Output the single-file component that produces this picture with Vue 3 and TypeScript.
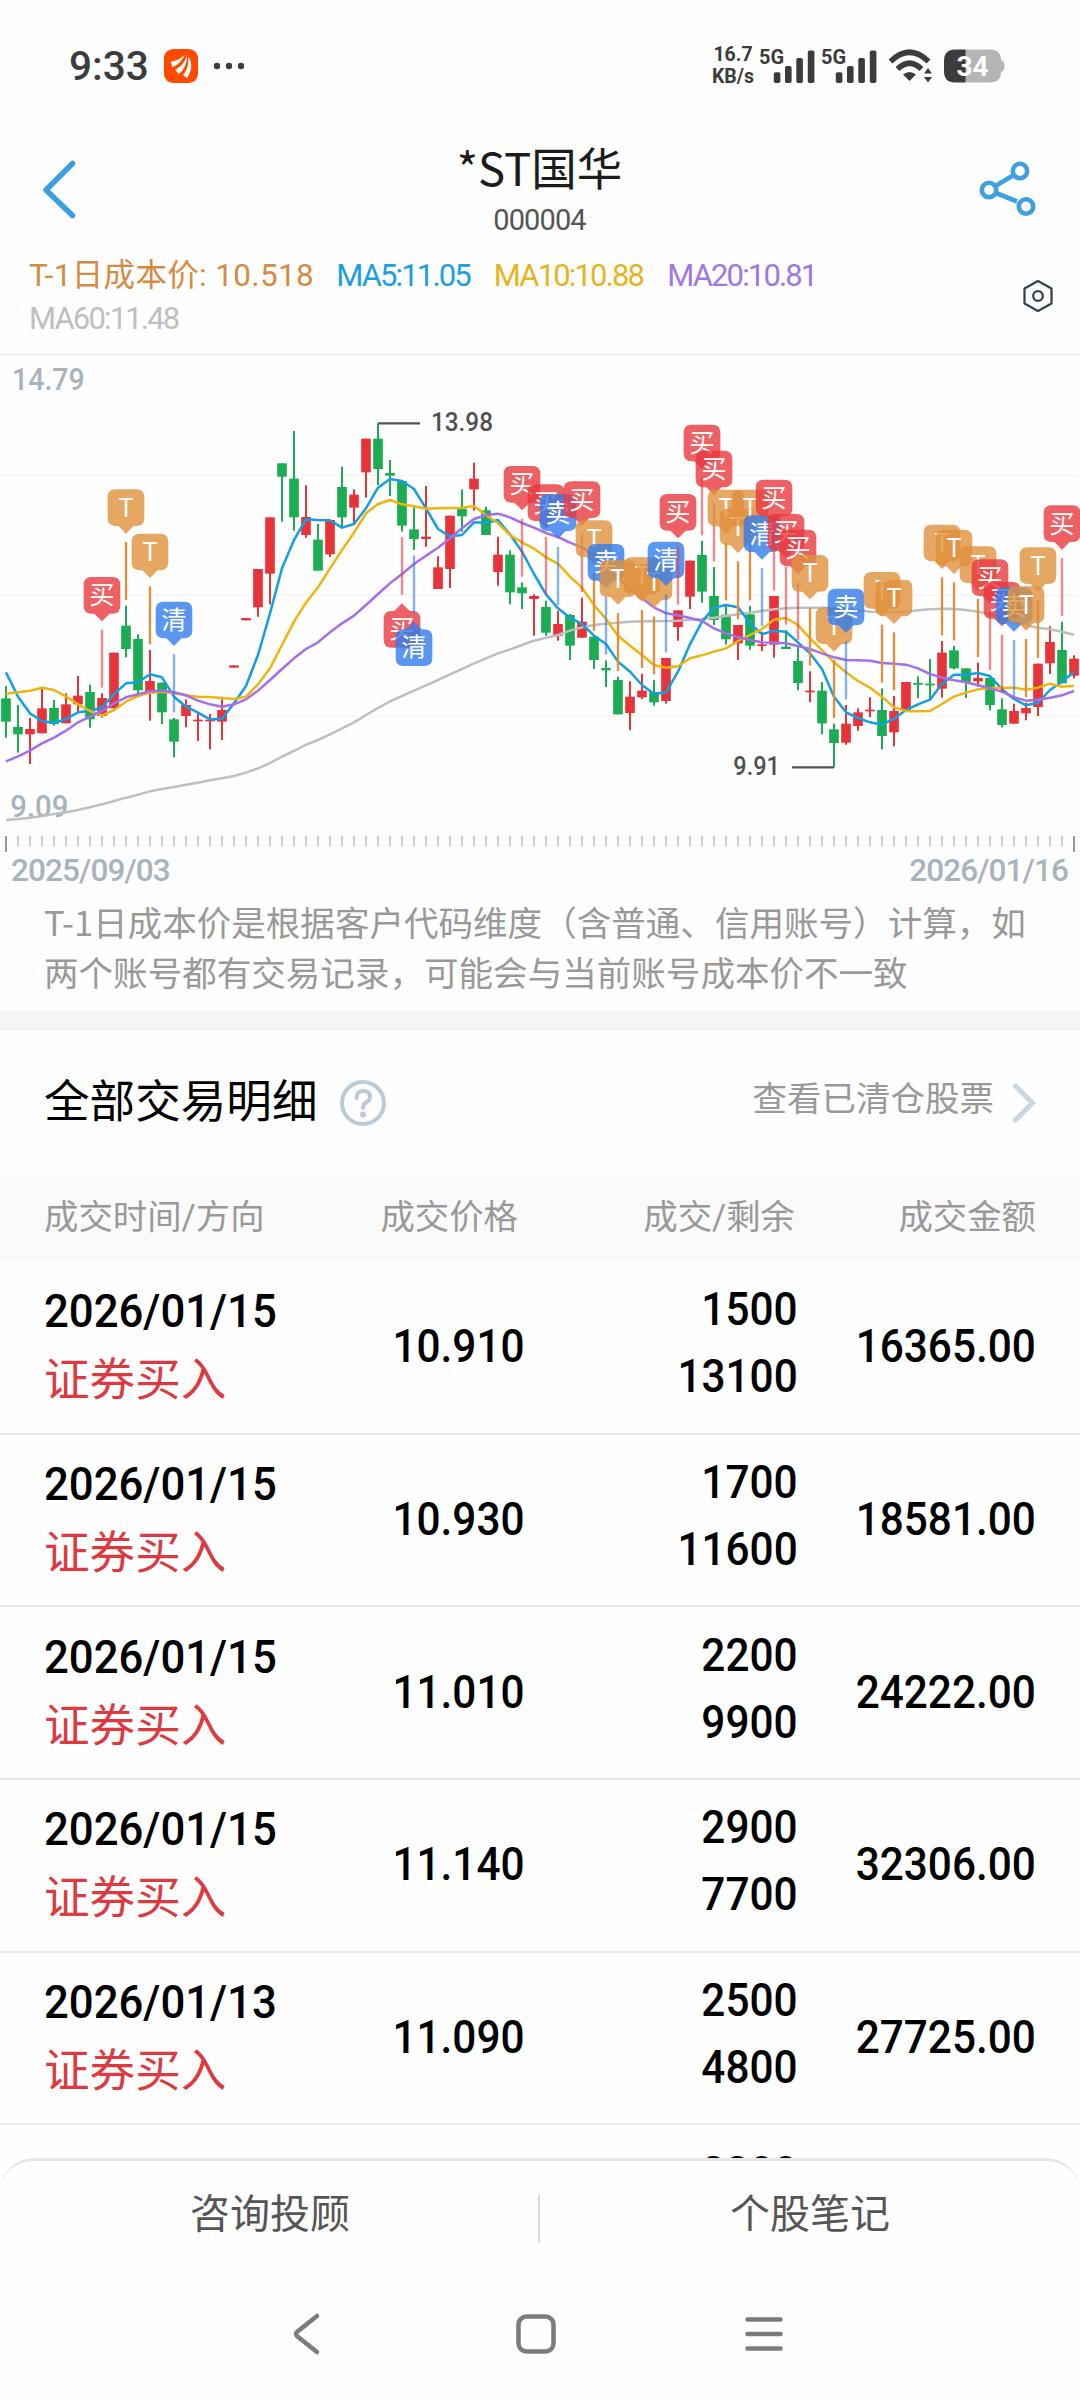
<template>
  <div class="page">
    <header class="status">
      <span class="status__time">9:33</span>
      <svg class="status__app" width="34" height="34" viewBox="0 0 34 34">
        <rect width="34" height="34" rx="9" fill="#ff4a00" />
        <path
          d="M7 12.5C12 12 18 9 21 5.500C18 12 13 17 8 18Z M11 21C17 18 22 12 22.500 6C24 13 20 21 15 25Z M19 26C24 20 25 13 24 7.500C29 13 28 22 23 29Z"
          fill="#fff"
        />
      </svg>
      <svg class="status__dots" width="32" height="8" viewBox="0 0 32 8">
        <circle v-for="x in [4, 16, 28]" :key="x" :cx="x" cy="4" r="3.200" />
      </svg>
      <div class="status__speed">
        <span>16.7</span>
        <span>KB/s</span>
      </div>
      <div v-for="n in 2" :key="n" class="signal">
        <span class="signal__label">5G</span>
        <svg width="55" height="35" viewBox="0 0 55 35">
          <rect x="13.800" y="23.200" width="6.600" height="10.800" rx="1.800" />
          <rect x="25" y="17" width="6.600" height="17" rx="1.800" />
          <rect x="36.300" y="9" width="6.600" height="25" rx="1.800" />
          <rect x="47.800" y="1.400" width="6.600" height="32.600" rx="1.800" />
        </svg>
      </div>
      <svg class="status__wifi" width="44" height="34" viewBox="0 0 44 34">
        <path
          d="M2.500 12.500Q21.500 -6 40.500 12.500M9.500 20Q21.500 8.500 33.500 20"
          fill="none"
          stroke="#3c3c3c"
          stroke-width="5.500"
        />
        <path d="M15 25.500Q21.500 20.500 28 25.500L21.500 32Z" />
        <path d="M36 24.500L40 19L44 24.500ZM36 28L40 33.500L44 28Z" />
      </svg>
      <svg class="status__battery" width="61" height="34" viewBox="0 0 61 34">
        <path d="M21 .500H46Q57 .500 57 11Q60.500 12 60.500 17Q60.500 22 57 23Q57 33.500 46 33.500H21Z" fill="#b5b5b5" />
        <path d="M21.500 .500H11Q0 .500 0 12V22Q0 33.500 11 33.500H21.500Z" />
        <text x="28.500" y="26.500" text-anchor="middle">34</text>
      </svg>
    </header>

    <nav class="topbar">
      <svg width="36" height="60" viewBox="0 0 36 60">
        <path d="M32.500 4.500L6 31L32.500 56.500" fill="none" stroke="#3b9de2" stroke-width="5.500" stroke-linecap="round" stroke-linejoin="round" />
      </svg>
      <div class="topbar__title">
        <h1>*ST国华</h1>
        <span>000004</span>
      </div>
      <svg width="58" height="60" viewBox="0 0 58 60">
        <g fill="none" stroke="#3f9fdf" stroke-width="4.600">
          <path d="M16.500 27L34 16.500M17 34L38 42.500" />
          <circle cx="10" cy="31" r="7.200" />
          <circle cx="41" cy="12" r="7.200" />
          <circle cx="47" cy="47.500" r="7.200" />
        </g>
      </svg>
    </nav>

    <div class="legend">
      <div class="legend__items">
        <span v-for="item in legend" :key="item.text" :class="item.kind">{{ item.text }}</span>
      </div>
      <svg width="32" height="36" viewBox="0 0 32 36" fill="none" stroke="#37424d" stroke-width="2.300" stroke-linejoin="round">
        <path d="M16 3L29.500 10.500V25.500L16 33L2.500 25.500V10.500Z" />
        <circle cx="16" cy="18" r="4.800" />
      </svg>
    </div>

    <!-- chart units are thirds of a pixel -->
    <svg class="chart" width="1080" height="500" viewBox="0 12 3240 1500">
      <line x1="0" x2="3240" y1="13" y2="13" stroke="#e9e9e9" stroke-width="6" />
      <line v-for="y in [376, 736, 1097]" :key="y" x1="0" x2="3234" :y1="y" :y2="y" stroke="#f7f7f7" stroke-width="6" />

      <text class="chart__scale" x="36" y="120" textLength="218" lengthAdjust="spacingAndGlyphs">14.79</text>
      <text class="chart__scale" x="31" y="1402" textLength="174" lengthAdjust="spacingAndGlyphs">9.09</text>

      <g v-for="(c, i) in candles" :key="i" :fill="c[0] ? '#e83339' : '#1cad52'">
        <rect :x="px(i) - 3" :y="c[1]" width="6" :height="c[4] - c[1]" />
        <rect :x="px(i) - 14.500" :y="c[2]" width="29" :height="c[3] - c[2]" />
      </g>

      <polyline :points="toPoints(ma60)" class="line line--ma60" />
      <polyline :points="toPoints(ma5)" class="line line--ma5" />
      <polyline :points="toPoints(ma10)" class="line line--ma10" />
      <polyline :points="toPoints(ma20)" class="line line--ma20" />

      <path d="M1134 220H1260M2376 1252H2502" stroke="#555" stroke-width="7" />
      <text class="chart__peak" x="1293" y="243" textLength="186" lengthAdjust="spacingAndGlyphs">13.98</text>
      <text class="chart__peak" x="2200" y="1274" textLength="140" lengthAdjust="spacingAndGlyphs">9.91</text>

      <g v-for="m in marks" :key="m.index" :transform="`translate(${px(m.index)} ${markY(m)})`">
        <rect
          x="-3.500"
          :y="m.below ? 16 : -191"
          width="7"
          height="174"
          :fill="markColors[m.label]"
          :opacity="m.label === 'T' ? 1 : 0.600"
        />
        <path :d="m.below ? bubbleBelow : bubbleAbove" :fill="markColors[m.label]" opacity="0.800" />
        <text class="chart__mark" text-anchor="middle" y="0" :dy="m.below ? 318 : -267">{{ m.label }}</text>
      </g>

      <rect
        v-for="n in 90"
        :key="'t' + n"
        :x="px(n - 1) - 3"
        y="1458"
        width="6"
        :height="n === 1 || n === 90 ? 48 : 32"
        :fill="n === 1 || n === 90 ? '#9a9a9a' : '#d0d0d0'"
      />
    </svg>

    <div class="dates">
      <span>2025/09/03</span>
      <span>2026/01/16</span>
    </div>

    <p class="note">
      T-1日成本价是根据客户代码维度（含普通、信用账号）计算，如<br />两个账号都有交易记录，可能会与当前账号成本价不一致
    </p>

    <section class="trades">
      <div class="trades__head">
        <h2>全部交易明细</h2>
        <svg width="48" height="48" viewBox="0 0 48 48" fill="none" stroke="#bccad6" stroke-width="4">
          <circle cx="24" cy="24" r="21" />
          <path d="M17.500 19Q17.500 12 24.500 12Q31 12 31 18Q31 21.500 27 23.500Q24 25.200 24 29" stroke-linecap="round" />
          <circle cx="24" cy="35.500" r="3" fill="#bccad6" stroke="none" />
        </svg>
        <a href="#" @click.prevent>查看已清仓股票</a>
        <svg width="26" height="44" viewBox="0 0 26 44">
          <path d="M4.500 5L21.500 22L4.500 39" fill="none" stroke="#cad6e1" stroke-width="5" stroke-linecap="round" />
        </svg>
      </div>

      <div class="row row--head">
        <span>成交时间/方向</span>
        <span>成交价格</span>
        <span>成交/剩余</span>
        <span>成交金额</span>
      </div>

      <div v-for="(t, i) in trades" :key="i" class="row">
        <div class="row__when">
          <span class="row__date">{{ t.date }}</span>
          <span class="row__side">证券买入</span>
        </div>
        <span class="num">{{ t.price }}</span>
        <div class="row__qty">
          <span class="num">{{ t.qty }}</span>
          <span class="num">{{ t.left }}</span>
        </div>
        <span class="num">{{ t.amount }}</span>
      </div>
    </section>

    <footer class="footer">
      <div class="actions">
        <span>咨询投顾</span>
        <i></i>
        <span>个股笔记</span>
      </div>
      <div class="sysnav">
        <svg width="44" height="44" viewBox="0 0 44 44">
          <path d="M31 4L11.500 19.500Q8.500 22 11.500 24.500L31 40" />
        </svg>
        <svg width="44" height="44" viewBox="0 0 44 44">
          <rect x="4.500" y="4.500" width="35" height="35" rx="8" />
        </svg>
        <svg width="44" height="44" viewBox="0 0 44 44">
          <path d="M5.500 7.500H38.500M5.500 22H38.500M5.500 36.500H38.500" />
        </svg>
      </div>
    </footer>
  </div>
</template>

<script setup lang="ts">
type Candle = [number, number, number, number, number];
type Label = "买" | "卖" | "清" | "T";

interface Mark {
  index: number;
  label: Label;
  below?: boolean;
}

const legend = [
  { text: "T-1日成本价: 10.518", kind: "cost" },
  { text: "MA5:11.05", kind: "ma5" },
  { text: "MA10:10.88", kind: "ma10" },
  { text: "MA20:10.81", kind: "ma20" },
  { text: "MA60:11.48", kind: "ma60" },
];

// [rising, high, body top, body bottom, low]
const candles: Candle[] = [
  [0, 1008, 1045, 1115, 1163], [0, 1065, 1131, 1153, 1208], [1, 1104, 1137, 1153, 1242],
  [1, 1015, 1075, 1150, 1150], [0, 1050, 1074, 1122, 1127], [1, 1030, 1063, 1120, 1120],
  [1, 978, 1037, 1063, 1090], [0, 1004, 1026, 1108, 1133], [1, 1030, 1044, 1098, 1103],
  [1, 908, 908, 1075, 1075], [0, 767, 827, 897, 922], [0, 853, 867, 1021, 1033],
  [1, 900, 993, 1030, 1112], [0, 998, 998, 1087, 1122], [0, 1104, 1108, 1175, 1222],
  [1, 1048, 1065, 1098, 1132], [1, 1086, 1109, 1114, 1173], [1, 1092, 1109, 1114, 1198],
  [1, 1048, 1080, 1115, 1170], [1, 946, 946, 953, 953], [1, 804, 804, 811, 811],
  [1, 657, 657, 772, 800], [1, 502, 502, 671, 763], [0, 340, 340, 380, 515],
  [0, 243, 386, 502, 542], [1, 406, 501, 555, 563], [0, 522, 569, 662, 662],
  [1, 510, 510, 613, 621], [0, 350, 411, 502, 530], [1, 418, 434, 473, 520],
  [1, 266, 266, 367, 443], [0, 220, 266, 357, 405], [0, 330, 369, 377, 438],
  [0, 393, 393, 527, 545], [0, 470, 538, 567, 600], [1, 408, 560, 567, 590],
  [1, 619, 652, 717, 717], [1, 497, 497, 657, 714], [0, 418, 476, 499, 545],
  [1, 338, 386, 418, 482], [0, 470, 481, 555, 555], [1, 560, 614, 666, 707],
  [0, 601, 614, 727, 763], [0, 697, 712, 730, 777], [1, 733, 738, 747, 857],
  [0, 752, 771, 848, 857], [1, 782, 822, 857, 872], [0, 792, 795, 887, 930],
  [1, 743, 815, 863, 863], [0, 860, 860, 930, 957], [0, 931, 954, 961, 1011],
  [0, 980, 990, 1093, 1093], [1, 994, 1040, 1089, 1141], [1, 971, 1022, 1042, 1047],
  [0, 990, 1026, 1057, 1067], [1, 924, 924, 1053, 1061], [1, 781, 781, 831, 872],
  [1, 632, 632, 740, 777], [0, 573, 615, 725, 758], [0, 651, 738, 810, 825],
  [0, 768, 794, 868, 884], [1, 825, 825, 880, 930], [0, 768, 793, 887, 899],
  [1, 845, 883, 888, 903], [1, 738, 738, 884, 923], [0, 841, 890, 897, 897],
  [0, 888, 933, 999, 1021], [1, 964, 1022, 1027, 1057], [0, 996, 1022, 1120, 1153],
  [0, 1121, 1138, 1179, 1252], [1, 1065, 1121, 1178, 1184], [1, 1075, 1087, 1128, 1142],
  [1, 1042, 1079, 1084, 1101], [0, 1015, 1080, 1158, 1198], [1, 1038, 1083, 1147, 1189],
  [1, 996, 996, 1080, 1080], [0, 979, 999, 1004, 1044], [0, 927, 1001, 1006, 1045],
  [1, 873, 908, 1016, 1043], [0, 888, 901, 955, 958], [0, 955, 955, 998, 1044],
  [1, 938, 984, 994, 1010], [0, 977, 984, 1065, 1081], [0, 1045, 1078, 1125, 1132],
  [1, 1061, 1083, 1121, 1121], [1, 1058, 1074, 1090, 1111], [1, 941, 941, 1071, 1098],
  [1, 829, 876, 940, 972], [0, 815, 900, 1000, 1000], [1, 916, 926, 977, 985],
];

const ma5 = [
  967, 1040, 1090, 1113, 1119, 1107, 1087, 1082, 1073, 1032, 1000, 997, 973, 982, 1040, 1070, 1088, 1108,
  1106, 1060, 1008, 915, 790, 655, 570, 508, 510, 511, 533, 522, 475, 413, 387, 393, 417, 475, 537, 559,
  555, 517, 519, 510, 553, 605, 672, 733, 775, 803, 822, 857, 882, 935, 965, 1005, 1032, 1027, 965, 883,
  815, 773, 765, 772, 820, 853, 842, 845, 877, 910, 957, 1040, 1087, 1104, 1117, 1124, 1106, 1080, 1063,
  1049, 1001, 974, 974, 969, 978, 1018, 1047, 1066, 1058, 1020, 995, 965,
];

const ma10 = [
  1031, 1027, 1022, 1013, 1020, 1040, 1063, 1083, 1097, 1080, 1055, 1038, 1028, 1025, 1030, 1036, 1040,
  1041, 1044, 1047, 1040, 1003, 955, 885, 815, 758, 712, 655, 600, 548, 490, 462, 450, 463, 469, 476, 475,
  474, 473, 468, 495, 520, 555, 577, 596, 622, 641, 680, 713, 765, 807, 857, 887, 915, 945, 953, 949, 925,
  916, 905, 895, 873, 855, 837, 809, 804, 825, 865, 900, 937, 967, 993, 1013, 1040, 1072, 1083, 1084, 1083,
  1062, 1040, 1028, 1018, 1015, 1013, 1013, 1019, 1013, 1001, 1010, 1007,
];

const ma20 = [
  1234, 1219, 1202, 1180, 1163, 1142, 1117, 1100, 1083, 1060, 1042, 1033, 1024, 1022, 1027, 1036, 1052,
  1063, 1070, 1063, 1048, 1022, 990, 957, 925, 897, 877, 847, 820, 797, 765, 732, 700, 672, 642, 617, 593,
  565, 535, 507, 495, 491, 502, 519, 533, 549, 561, 578, 592, 618, 648, 685, 715, 745, 772, 790, 796, 804,
  813, 835, 850, 862, 870, 877, 878, 880, 888, 897, 910, 922, 930, 931, 932, 939, 941, 944, 955, 972, 983,
  991, 997, 1006, 1015, 1025, 1042, 1052, 1049, 1043, 1036, 1023,
];

const ma60 = [
  1410, 1407, 1403, 1398, 1392, 1387, 1380, 1372, 1363, 1353, 1343, 1334, 1324, 1317, 1311, 1304, 1298,
  1291, 1285, 1278, 1268, 1255, 1239, 1220, 1203, 1184, 1170, 1153, 1135, 1117, 1095, 1074, 1054, 1038,
  1022, 1006, 990, 973, 957, 940, 925, 910, 898, 885, 872, 863, 855, 842, 832, 825, 821, 818, 815, 814, 814,
  813, 812, 809, 807, 803, 798, 793, 788, 783, 778, 775, 773, 773, 773, 775, 777, 781, 785, 786, 786, 785,
  781, 778, 776, 777, 780, 785, 792, 805, 817, 826, 833, 838, 845, 854,
];

const marks: Mark[] = [
  { index: 8, label: "买" },
  { index: 10, label: "T" },
  { index: 12, label: "T" },
  { index: 14, label: "清" },
  { index: 33, label: "买", below: true },
  { index: 34, label: "清", below: true },
  { index: 43, label: "买" },
  { index: 45, label: "买" },
  { index: 46, label: "卖" },
  { index: 48, label: "买" },
  { index: 49, label: "T" },
  { index: 50, label: "卖" },
  { index: 51, label: "T" },
  { index: 53, label: "T" },
  { index: 54, label: "T" },
  { index: 55, label: "清" },
  { index: 56, label: "买" },
  { index: 58, label: "买" },
  { index: 59, label: "买" },
  { index: 60, label: "T" },
  { index: 61, label: "T" },
  { index: 62, label: "T" },
  { index: 63, label: "清" },
  { index: 64, label: "买" },
  { index: 65, label: "买" },
  { index: 66, label: "买" },
  { index: 67, label: "T" },
  { index: 69, label: "T" },
  { index: 70, label: "卖" },
  { index: 73, label: "T" },
  { index: 74, label: "T" },
  { index: 78, label: "T" },
  { index: 79, label: "T" },
  { index: 81, label: "T" },
  { index: 82, label: "买" },
  { index: 83, label: "买" },
  { index: 84, label: "卖" },
  { index: 85, label: "T" },
  { index: 86, label: "T" },
  { index: 88, label: "买" },
];

const markColors: Record<Label, string> = {
  买: "#e8383d",
  卖: "#317cec",
  清: "#317cec",
  T: "#e0913c",
};

const bubbleAbove =
  "M-31 -349H31Q55 -349 55 -325V-263Q55 -239 31 -239H23L0 -216L-23 -239H-31Q-55 -239 -55 -263V-325Q-55 -349 -31 -349Z";
const bubbleBelow =
  "M-31 348H31Q55 348 55 324V262Q55 238 31 238H23L0 215L-23 238H-31Q-55 238 -55 262V324Q-55 348 -31 348Z";

const trades = [
  { date: "2026/01/15", price: "10.910", qty: 1500, left: 13100, amount: "16365.00" },
  { date: "2026/01/15", price: "10.930", qty: 1700, left: 11600, amount: "18581.00" },
  { date: "2026/01/15", price: "11.010", qty: 2200, left: 9900, amount: "24222.00" },
  { date: "2026/01/15", price: "11.140", qty: 2900, left: 7700, amount: "32306.00" },
  { date: "2026/01/13", price: "11.090", qty: 2500, left: 4800, amount: "27725.00" },
  { date: "2026/01/13", price: "", qty: 2300, left: 2300, amount: "" },
];

const px = (i: number) => 18 + i * 36;

const toPoints = (values: number[]) =>
  values.map((v, i) => `${px(i)},${v}`).join(" ");

const markY = (m: Mark) => candles[m.index][m.below ? 4 : 1];
</script>

<style>
body {
  margin: 0;
  background: #fff;
}
</style>

<style scoped>
.page {
  position: relative;
  width: 1080px;
  height: 2400px;
  overflow: hidden;
  background: #fefefe;
  font-family: Roboto, "Noto Sans CJK SC", sans-serif;
}

svg {
  display: block;
  flex: none;
}

.status {
  display: flex;
  align-items: center;
  box-sizing: border-box;
  height: 132px;
  padding: 0 75px 0 69px;
  color: #3c3c3c;
  fill: #3c3c3c;
}

.status__time {
  width: 95px;
  font-size: 40.500px;
  font-weight: 500;
}

.status__dots {
  margin-left: 15px;
}

.status__speed {
  display: flex;
  flex-direction: column;
  align-items: center;
  width: 46px;
  margin-left: auto;
  font-size: 19.500px;
  font-weight: 700;
  line-height: 22.500px;
}

.signal {
  position: relative;
  margin-left: 7px;
}

.status__speed + .signal {
  margin-left: 4px;
}

.signal__label {
  position: absolute;
  top: -3px;
  left: -1px;
  font-size: 20px;
  font-weight: 700;
  line-height: 23px;
}

.status__wifi {
  margin-left: 11px;
}

.status__battery {
  margin-left: 12px;
}

.status__battery text {
  fill: #fff;
  font-size: 28px;
  font-weight: 700;
}

.topbar {
  display: flex;
  align-items: flex-start;
  justify-content: space-between;
  box-sizing: border-box;
  height: 114px;
  padding: 0 43px 0 40px;
}

.topbar > svg {
  margin-top: 27px;
}

.topbar__title {
  display: flex;
  flex-direction: column;
  align-items: center;
  margin-left: 24px;
}

.topbar__title h1 {
  margin: 4px 0 0;
  color: #1c1c1c;
  font-family: "Noto Sans CJK SC", sans-serif;
  font-size: 45.500px;
  font-weight: 400;
  line-height: 60px;
}

.topbar__title span {
  margin-top: 8px;
  color: #555;
  font-size: 29px;
  line-height: 32px;
  letter-spacing: -0.900px;
}

.legend {
  display: flex;
  justify-content: space-between;
  box-sizing: border-box;
  height: 108px;
  padding: 8px 26px 0 29px;
}

.legend__items {
  display: flex;
  flex-wrap: wrap;
  align-content: flex-start;
  column-gap: 24px;
  width: 900px;
  font-size: 31px;
  line-height: 43px;
  letter-spacing: -1.850px;
}

.legend svg {
  margin-top: 24px;
}

.cost {
  margin-right: -2px;
  color: #d58c42;
  font-size: 31.500px;
  letter-spacing: 0.350px;
}

.ma5 {
  color: #1b9fe0;
}

.ma10 {
  color: #e6b422;
}

.ma20 {
  color: #a077e3;
}

.ma60 {
  color: #bfbfbf;
}

.chart__scale {
  fill: #a9b3bc;
  font-size: 95px;
  font-weight: 500;
}

.chart__peak {
  fill: #505050;
  font-size: 80px;
  font-weight: 500;
}

.chart__mark {
  fill: #fff;
  font-family: "Noto Sans CJK SC", sans-serif;
  font-size: 76px;
}

.line {
  fill: none;
  stroke-width: 7.500;
  stroke-linejoin: round;
}

.line--ma5 {
  stroke: #139fe2;
}

.line--ma10 {
  stroke: #f0b40e;
}

.line--ma20 {
  stroke: #a56fec;
}

.line--ma60 {
  stroke: #bfbfbf;
}

.dates {
  display: flex;
  justify-content: space-between;
  padding: 1px 12px 0 11px;
  color: #a9b3bc;
  font-size: 31.500px;
  font-weight: 500;
  line-height: 32px;
  letter-spacing: -0.900px;
}

.note {
  margin: 0;
  padding: 9px 0 15px 44px;
  border-bottom: 20px solid #f5f5f5;
  color: #999;
  font-family: "Noto Sans CJK SC", sans-serif;
  font-size: 34.550px;
  line-height: 50px;
  white-space: nowrap;
}

.trades__head {
  display: flex;
  align-items: center;
  box-sizing: border-box;
  height: 144px;
  padding: 0 43px 0 44px;
}

.trades__head h2 {
  margin: 0 21px 11px 0;
  color: #000;
  font-size: 45.600px;
  font-weight: 400;
}

.trades__head a {
  margin: 0 17px 14px auto;
  color: #999;
  font-size: 34.500px;
  text-decoration: none;
}

.row {
  display: grid;
  grid-template-columns: 300px 181px 273px 238px;
  align-items: center;
  justify-items: end;
  box-sizing: border-box;
  height: 172.700px;
  padding: 0 44px 2px;
  border-bottom: 2px solid #e8e8e8;
  color: #000;
  font-size: 46px;
}

.row > :first-child {
  justify-self: start;
}

.row--head {
  height: 87px;
  padding-bottom: 9px;
  border: none;
  background: #fafafa;
  color: #999;
  font-size: 34.400px;
}

.row--head span:nth-child(2) {
  margin-right: 7px;
}

.row--head span:nth-child(3) {
  margin-right: 3px;
}

.row__when,
.row__qty {
  display: flex;
  flex-direction: column;
  line-height: 69px;
}

.row__qty {
  align-items: flex-end;
  margin-bottom: 6px;
  line-height: 67px;
}

.row__date {
  font-weight: 500;
  transform: scaleX(0.950);
  transform-origin: left;
}

.row__side {
  color: #dc3a40;
  font-size: 45.600px;
}

.num {
  font-weight: 500;
  transform: scaleX(0.920);
  transform-origin: right;
}

.footer {
  position: absolute;
  right: 0;
  bottom: 0;
  left: 0;
  box-sizing: border-box;
  height: 242px;
  border-top: 3px solid #e6e6e6;
  border-radius: 34px 34px 0 0;
  background: #fefefe;
}

.actions {
  display: flex;
  align-items: center;
  height: 106px;
  padding-top: 4px;
  color: #555;
  font-size: 40px;
}

.actions span {
  flex: 1;
  padding-bottom: 14px;
  text-align: center;
}

.actions i {
  width: 2px;
  height: 49px;
  margin-left: -2px;
  background: #dcdcdc;
}

.sysnav {
  display: flex;
  justify-content: center;
  gap: 184px;
  padding: 41px 8px 0 0;
  fill: none;
  stroke: #7b7b7b;
  stroke-width: 4.500;
  stroke-linecap: round;
}
</style>
